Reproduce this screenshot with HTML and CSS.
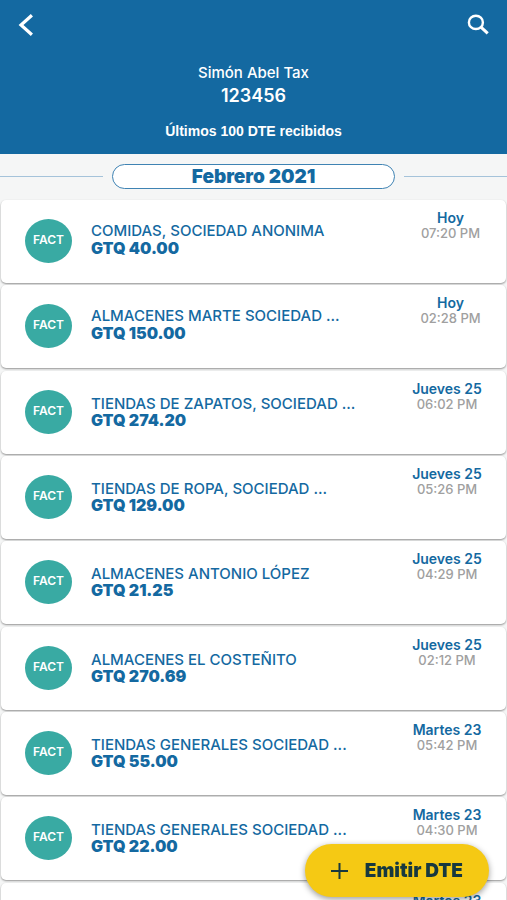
FILE: index.html
```html
<!DOCTYPE html>
<html lang="es">
<head>
    <meta charset="UTF-8">
    <meta name="viewport" content="width=device-width, initial-scale=1.0">
    <title>DTE recibidos</title>
    <link rel="stylesheet" href="styles.css">
</head>
<body>
    <header class="header">
        <div class="toolbar">
            <button type="button" class="icon-button" aria-label="Regresar">
                <svg width="16" height="22" viewBox="0 0 16 22"><path d="M13.9 1.2L3 11l10.9 9.8" fill="none" stroke="#fff" stroke-width="3.2"/></svg>
            </button>
            <button type="button" class="icon-button" aria-label="Buscar">
                <svg width="22" height="21" viewBox="0 0 22 21"><ellipse cx="8.9" cy="8.4" rx="7" ry="6.6" fill="none" stroke="#fff" stroke-width="2.4"/><path d="M13.7 12.8l7 6.6" stroke="#fff" stroke-width="3"/></svg>
            </button>
        </div>
        <p class="user-name">Simón Abel Tax</p>
        <p class="user-id">123456</p>
        <h1 class="title">Últimos 100 DTE recibidos</h1>
    </header>

    <main class="content">
        <div class="month-row">
            <h2 class="month">Febrero 2021</h2>
        </div>

        <ul class="list">
            <li class="card today">
                <span class="badge">FACT</span>
                <div class="info">
                    <p class="name">COMIDAS, SOCIEDAD ANONIMA</p>
                    <p class="amount">GTQ 40.00</p>
                </div>
                <div class="date"><p class="day">Hoy</p><p class="time">07:20 PM</p></div>
            </li>
            <li class="card today">
                <span class="badge">FACT</span>
                <div class="info">
                    <p class="name">ALMACENES MARTE SOCIEDAD ...</p>
                    <p class="amount">GTQ 150.00</p>
                </div>
                <div class="date"><p class="day">Hoy</p><p class="time">02:28 PM</p></div>
            </li>
            <li class="card">
                <span class="badge">FACT</span>
                <div class="info">
                    <p class="name">TIENDAS DE ZAPATOS, SOCIEDAD ...</p>
                    <p class="amount">GTQ 274.20</p>
                </div>
                <div class="date"><p class="day">Jueves 25</p><p class="time">06:02 PM</p></div>
            </li>
            <li class="card">
                <span class="badge">FACT</span>
                <div class="info">
                    <p class="name">TIENDAS DE ROPA, SOCIEDAD ...</p>
                    <p class="amount">GTQ 129.00</p>
                </div>
                <div class="date"><p class="day">Jueves 25</p><p class="time">05:26 PM</p></div>
            </li>
            <li class="card">
                <span class="badge">FACT</span>
                <div class="info">
                    <p class="name">ALMACENES ANTONIO LÓPEZ</p>
                    <p class="amount">GTQ 21.25</p>
                </div>
                <div class="date"><p class="day">Jueves 25</p><p class="time">04:29 PM</p></div>
            </li>
            <li class="card">
                <span class="badge">FACT</span>
                <div class="info">
                    <p class="name">ALMACENES EL COSTEÑITO</p>
                    <p class="amount">GTQ 270.69</p>
                </div>
                <div class="date"><p class="day">Jueves 25</p><p class="time">02:12 PM</p></div>
            </li>
            <li class="card">
                <span class="badge">FACT</span>
                <div class="info">
                    <p class="name">TIENDAS GENERALES SOCIEDAD ...</p>
                    <p class="amount">GTQ 55.00</p>
                </div>
                <div class="date"><p class="day">Martes 23</p><p class="time">05:42 PM</p></div>
            </li>
            <li class="card">
                <span class="badge">FACT</span>
                <div class="info">
                    <p class="name">TIENDAS GENERALES SOCIEDAD ...</p>
                    <p class="amount">GTQ 22.00</p>
                </div>
                <div class="date"><p class="day">Martes 23</p><p class="time">04:30 PM</p></div>
            </li>
            <li class="card">
                <div class="info"></div>
                <div class="date"><p class="day">Martes 23</p></div>
            </li>
        </ul>
    </main>

    <button type="button" class="fab">
        <svg width="17" height="16" viewBox="0 0 17 16"><path d="M8.5 0v16M0 8h17" stroke="#17383f" stroke-width="2"/></svg>
        Emitir DTE
    </button>
</body>
</html>
```
FILE: styles.css
```css
* {
    box-sizing: border-box;
}
body {
    margin: 0;
    height: 100vh;
    display: flex;
    flex-direction: column;
    background-color: #f5f6f6;
    color: #1469a1;
    font-family: Inter, "Liberation Sans", sans-serif;
}
p, h1, h2, ul {
    margin: 0;
    padding: 0;
}
button {
    border: none;
    font-family: inherit;
    cursor: pointer;
}

.header {
    flex: none;
    padding: 14px 18px 13px;
    background-color: #1469a1;
    color: white;
    text-align: center;
}
.toolbar {
    display: flex;
    justify-content: space-between;
    margin-bottom: 27px;
}
.icon-button {
    display: flex;
    padding: 0;
    background: none;
}
.icon-button svg {
    display: block;
}
.user-name {
    font-size: 15px;
    line-height: 20px;
    font-weight: 500;
}
.user-id {
    font-size: 18px;
    line-height: 26px;
    font-weight: 600;
}
.title {
    margin-top: 12px;
    font-family: "Liberation Sans", Arial, sans-serif;
    font-size: 14px;
    line-height: 20px;
    font-weight: bold;
}

.content {
    flex: 1;
    min-height: 0;
    overflow-y: auto;
    scrollbar-width: none;
}
.month-row {
    display: flex;
    align-items: center;
    gap: 9px;
    padding: 10px 0 11px;
}
.month-row::before, .month-row::after {
    content: "";
    flex: 1;
    height: 1px;
    background-color: #a5c3da;
}
.month {
    width: 56%;
    border: 1px solid #3f83b3;
    border-radius: 13px;
    background-color: white;
    font-size: 19px;
    line-height: 23px;
    font-weight: 900;
    text-align: center;
}

.list {
    display: flex;
    flex-direction: column;
    gap: 2px;
    padding: 0 1px;
    list-style: none;
}
.card {
    display: flex;
    align-items: flex-start;
    height: 83px;
    flex: none;
    padding: 0 14px 0 24px;
    border-radius: 5px;
    background-color: white;
    box-shadow: 0 1px 2px rgba(0, 0, 0, 0.4);
}
.card:nth-child(3n + 2) {
    margin-bottom: 1px;
}
.badge {
    width: 47px;
    height: 44px;
    margin-top: 19px;
    border-radius: 50%;
    background-color: #39aaa3;
    color: white;
    font-size: 12px;
    line-height: 42px;
    font-weight: 600;
    text-align: center;
}
.info {
    flex: 1;
    min-width: 0;
    padding: 24px 0 0 19px;
}
.name {
    font-size: 15px;
    line-height: 17px;
    font-weight: 500;
    white-space: nowrap;
}
.amount {
    font-size: 16px;
    line-height: 17px;
    font-weight: 900;
}
.today .info {
    padding-top: 21px;
}
.today .name {
    line-height: 19px;
}
.date {
    width: 90px;
    padding-top: 10px;
    text-align: center;
}
.today .date {
    padding-left: 7px;
}
.day {
    font-size: 14px;
    line-height: 16px;
    font-weight: 600;
}
.time {
    color: #a0a0a0;
    font-size: 13px;
    line-height: 14px;
    font-weight: 500;
}

.fab {
    position: fixed;
    right: 18px;
    bottom: 3px;
    display: flex;
    align-items: center;
    gap: 17px;
    height: 53px;
    padding: 0 26px;
    border-radius: 27px;
    background-color: #f5c914;
    color: #17383f;
    font-size: 19px;
    font-weight: 900;
    box-shadow: 0 2px 6px rgba(0, 0, 0, 0.4);
}
```
